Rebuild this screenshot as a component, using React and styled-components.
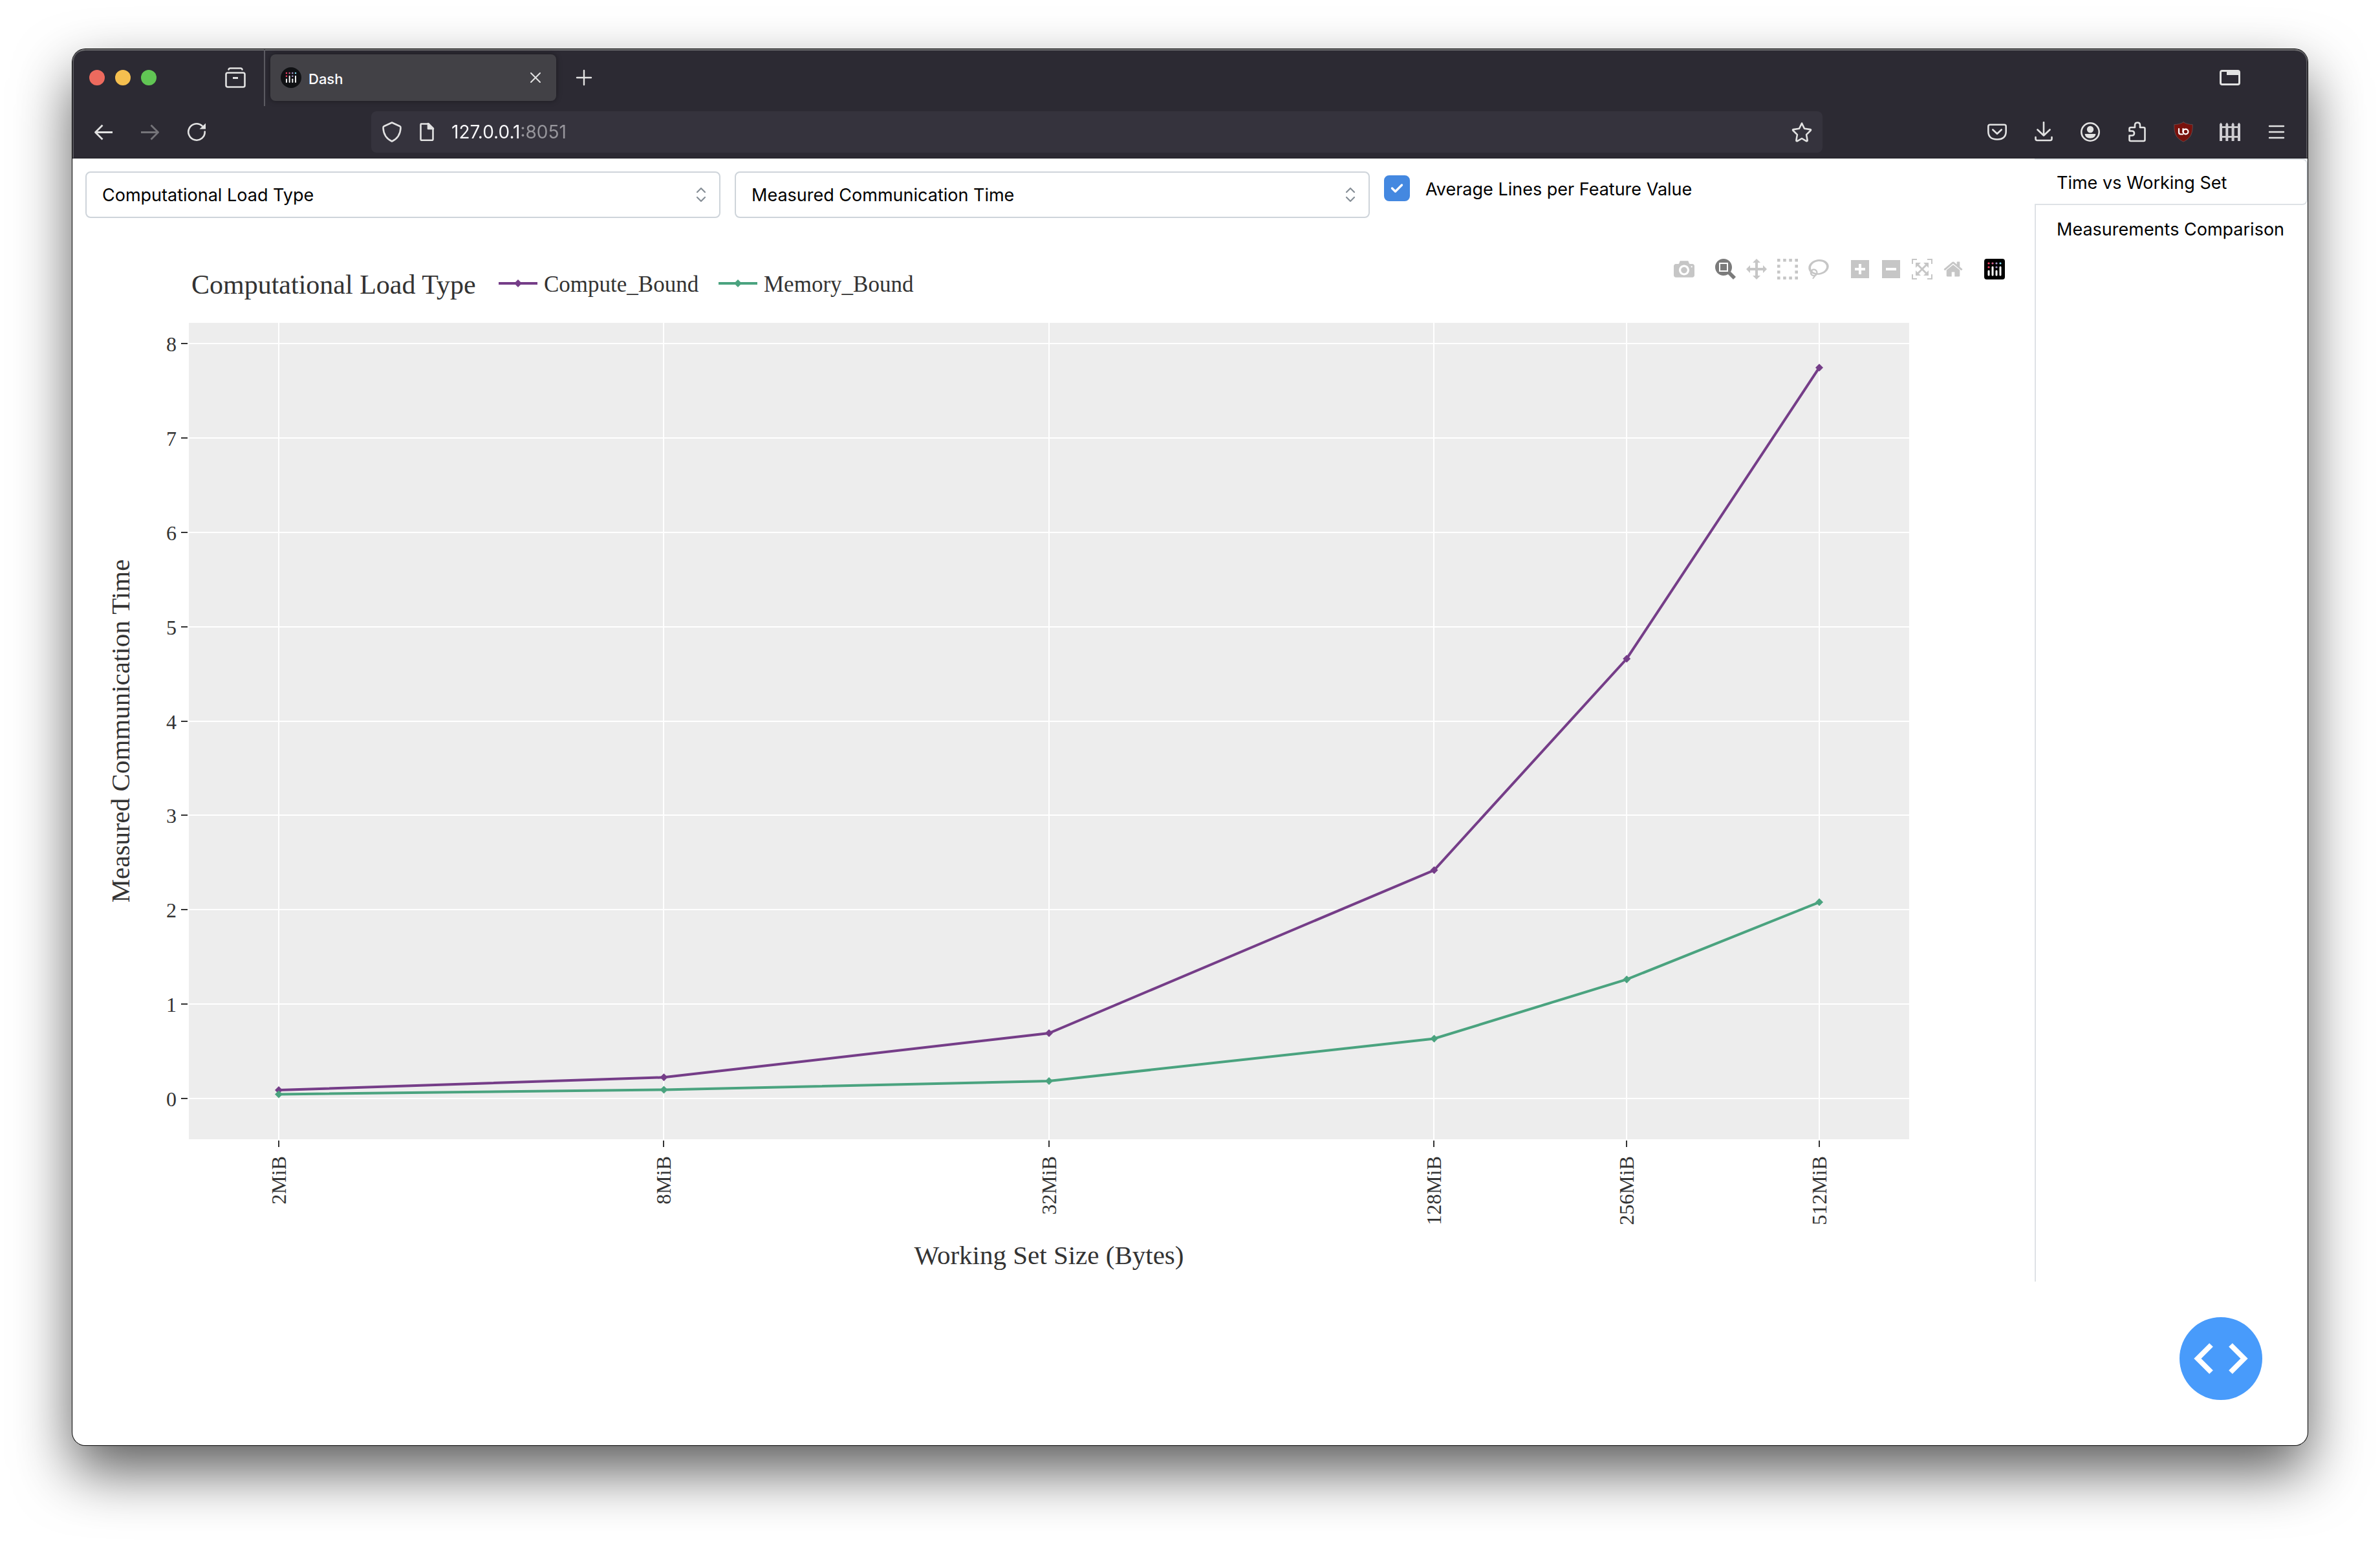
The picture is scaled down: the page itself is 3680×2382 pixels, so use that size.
import React, { useState } from "react";
import styled, { createGlobalStyle } from "styled-components";

const GlobalStyle = createGlobalStyle`
  *, *::before, *::after { box-sizing: border-box; }
  body { margin: 0; background: #fff; font-family: Inter, "Liberation Sans", sans-serif; }
  button, input, select { font: inherit; color: inherit; margin: 0; }
`;

/* ---------- window ---------- */

const Desktop = styled.div`
  min-height: 100vh;
  padding: 76px 112px 148px;
  display: flex;
  overflow: hidden;
`;

const Window = styled.div`
  position: relative;
  flex: 1;
  min-width: 0;
  display: flex;
  flex-direction: column;
  border-radius: 20px;
  background: #fff;
  box-shadow: 0 0 0 1px #000, 0 40px 88px rgba(0, 0, 0, 0.64);
`;

const Chrome = styled.header`
  background: #2c2a33;
  color: #e2e2e2;
  border-radius: 20px 20px 0 0;
  border-bottom: 1px solid #1c1b22;
  box-shadow: inset 2px 0 #55545a, inset -2px 0 #55545a, inset 0 2px #747476;
`;

const TitleBar = styled.div`
  display: flex;
  align-items: center;
  height: 88px;
  padding: 0 84px 0 26px;
`;

const Lights = styled.div`
  display: flex;
  gap: 16px;
  margin-right: 86px;
`;

const Light = styled.button`
  width: 24px;
  height: 24px;
  padding: 0;
  border: 0;
  border-radius: 50%;
  background: ${(p) => p.$color};
`;

const IconButton = styled.button`
  display: grid;
  place-items: center;
  width: 72px;
  height: 64px;
  padding: 0;
  border: 0;
  border-radius: 8px;
  background: none;
  opacity: ${(p) => (p.disabled ? 0.4 : 1)};
`;

const TabStrip = styled.div`
  display: flex;
  align-items: center;
  flex: 1;
  height: 88px;
  margin-left: 8px;
  padding-left: 8px;
  border-left: 2px solid #5b5a61;
`;

const BrowserTab = styled.div`
  display: flex;
  align-items: center;
  width: 442px;
  height: 72px;
  padding: 0 16px;
  border-radius: 8px;
  background: #424146;
  box-shadow: 0 0 8px rgba(0, 0, 0, 0.4);
`;

const TabTitle = styled.span`
  flex: 1;
  padding: 4px 0 0 11px;
  font-size: 22px;
  line-height: 28px;
  font-weight: 500;
  color: #fbfbfe;
`;

const CloseButton = styled(IconButton)`
  width: 32px;
  height: 32px;
`;

const NewTabButton = styled(IconButton)`
  margin-left: 7px;
`;

const NavBar = styled.div`
  display: flex;
  align-items: center;
  height: 80px;
  padding: 0 12px;
`;

const UrlBar = styled.div`
  display: flex;
  align-items: center;
  flex: 1;
  height: 64px;
  margin: 0 234px;
  padding: 0 16px;
  gap: 22px;
  border-radius: 8px;
  background: #35333d;
`;

const UrlInput = styled.input`
  flex: 1;
  min-width: 0;
  height: 40px;
  padding: 0;
  border: 0;
  outline: 0;
  font-size: 28px;
  color: transparent;
  background: linear-gradient(to right, #fbfbfe 109px, #97969c 109px);
  background-clip: text;
  -webkit-background-clip: text;
`;

/* ---------- dashboard ---------- */

const Page = styled.main`
  display: flex;
  align-items: flex-start;
  flex: 1;
  color: #000;
  font-size: 27px;
  line-height: 44px;
`;

const Content = styled.section`
  flex: 1;
  min-width: 0;
`;

const Controls = styled.form`
  display: grid;
  grid-template-columns: repeat(3, 1fr);
  gap: 22px;
  padding: 20px 24px 0 20px;
`;

const SelectBox = styled.div`
  display: grid;
  align-items: center;
  > * { grid-area: 1 / 1; }
  > svg { justify-self: end; margin-right: 22px; pointer-events: none; }
`;

const Select = styled.select`
  appearance: none;
  width: 100%;
  height: 72px;
  padding: 2px 60px 0 24px;
  border: 2px solid #ced4da;
  border-radius: 8px;
  background: #fff;
`;

const CheckRow = styled.label`
  display: flex;
  align-items: flex-start;
  gap: 24px;
  padding-top: 6px;
`;

const CheckBox = styled.span`
  display: grid;
  place-items: center;
  > * { grid-area: 1 / 1; }
  > svg { pointer-events: none; }
`;

const CheckInput = styled.input`
  appearance: none;
  width: 40px;
  height: 40px;
  border: 2px solid #ced4da;
  border-radius: 8px;
  &:checked { background: #4488e0; border-color: #4488e0; }
`;

const Figure = styled.figure`
  position: relative;
  margin: 0;
`;

const ModeBar = styled.div`
  position: absolute;
  top: 55px;
  right: 38px;
  display: flex;
  gap: 16px;
`;

const ModeGroup = styled.div`
  display: flex;
`;

const ModeButton = styled.button`
  display: grid;
  place-items: center;
  width: 48px;
  height: 48px;
  padding: 0;
  border: 0;
  background: none;
  color: ${(p) => (p.$active ? "#7b7b7b" : "#c6c6c6")};
`;

const ChartSvg = styled.svg`
  display: block;
  width: 100%;
  height: auto;
  font-family: "Liberation Serif", serif;
  fill: #333;
`;

const Tabs = styled.nav`
  display: flex;
  flex-direction: column;
  flex: 0 0 422px;
  align-self: flex-start;
  min-height: 1736px;
`;

const TabButton = styled.button`
  height: 72px;
  padding: 3px 0 0 32px;
  text-align: left;
  white-space: nowrap;
  background: none;
  border: 2px solid ${(p) => (p.$active ? "#dee2e6" : "transparent")};
  border-left-color: ${(p) => (p.$active ? "transparent" : "#dee2e6")};
  border-radius: ${(p) => (p.$active ? "0 8px 8px 0" : "0")};
  ${(p) => (p.$active ? "border-left: 0; padding-left: 34px;" : "border-width: 0 0 0 2px;")}
`;

const TabRail = styled.div`
  flex: 1;
  border-left: 2px solid #dee2e6;
`;

const DevToolsButton = styled.button`
  position: absolute;
  right: 70px;
  bottom: 70px;
  display: grid;
  place-items: center;
  width: 128px;
  height: 128px;
  padding: 0;
  border: 0;
  border-radius: 50%;
  background: #489bfb;
`;

/* ---------- icons ---------- */

const Icon = ({ children, size = 32 }) => (
  <svg width={size} height={size} viewBox="0 0 32 32" fill="none" stroke="currentColor" strokeWidth="2.6" strokeLinecap="round" strokeLinejoin="round" aria-hidden="true">
    {children}
  </svg>
);

const TabsOverview = () => (
  <Icon>
    <path d="M5.500 3.500q.5-2 2.500-2h16q2 0 2.500 2" />
    <rect x="1.500" y="8.500" width="29" height="22" rx="2.500" />
    <path d="M12 16.500h8" strokeWidth="3" strokeLinecap="butt" />
  </Icon>
);
const CloseX = () => (
  <Icon size={16}><path d="M2 2l28 28M30 2L2 30" strokeWidth="4" /></Icon>
);
const Plus = () => (
  <Icon><path d="M16 5v22M5 16h22" strokeWidth="2.400" /></Icon>
);
const WindowTabs = () => (
  <Icon>
    <rect x="1.500" y="5.500" width="29" height="21" rx="2.500" strokeWidth="3" />
    <path d="M11 5h18a2 2 0 0 1 2 2v5H11z" fill="currentColor" stroke="none" />
  </Icon>
);
const Back = () => (
  <Icon><path d="M30 16.500H4M14.500 5.500L3.500 16.500l11 11" strokeLinecap="butt" strokeWidth="2.800" /></Icon>
);
const Forward = () => (
  <Icon><path d="M2 16.500h26M17.500 5.500l11 11-11 11" strokeLinecap="butt" strokeWidth="2.800" /></Icon>
);
const Reload = () => (
  <Icon>
    <path d="M28.700 15.500A12.700 12.700 0 1 1 24.500 6.500" />
    <path d="M30 2.500v9h-9.500z" fill="currentColor" stroke="none" />
  </Icon>
);
const Shield = () => (
  <Icon><path d="M16 1.500l12 5.500c1.200.6 1.600 1.400 1.500 2.700C29 20 24.500 26.500 16 30.500 7.500 26.500 3 20 2.500 9.700 2.400 8.400 2.800 7.600 4 7z" /></Icon>
);
const PageIcon = () => (
  <Icon>
    <path d="M7 3.500h11.500l7 7V27q0 1.800-1.800 1.800H8.300Q6.500 28.800 6.500 27V5q0-1.500 1.500-1.500z" />
    <path d="M18 3l8 8h-8z" fill="currentColor" />
  </Icon>
);
const Star = () => (
  <Icon><path d="M16 2.500l4 8.300 9 1.300q1.600.4.500 1.700l-6.400 6.300 1.500 8.800q0 1.700-1.600 1.200L16 26l-7 4.100q-1.600.5-1.600-1.200l1.500-8.800-6.400-6.300q-1.100-1.300.5-1.700l9-1.300z" /></Icon>
);
const Pocket = () => (
  <Icon>
    <path d="M5 4.800h22q2.700 0 2.700 2.700V15q0 12.500-13.700 12.500T2.300 15V7.500Q2.300 4.800 5 4.800z" />
    <path d="M9.300 12.500L16 18.800l6.700-6.300" />
  </Icon>
);
const Download = () => (
  <Icon><path d="M16 1v20M6.500 12.500L16 21.500l9.500-9M3.500 24v2.500q0 2.500 2.500 2.500h20q2.500 0 2.500-2.500V24" /></Icon>
);
const Account = () => (
  <Icon>
    <circle cx="16" cy="16" r="13.700" />
    <circle cx="16" cy="12" r="5.200" fill="currentColor" stroke="none" />
    <path d="M7.500 19h17q-.8 6.700-8.500 6.700T7.500 19z" fill="currentColor" stroke="none" />
  </Icon>
);
const Puzzle = () => (
  <Icon><path d="M13 9V5.500q0-4 4-4t4 4V9h5.500q2 0 2 2v17q0 2-2 2H6.500q-2 0-2-2v-6.500h4q3.500 0 3.500-3.500t-3.500-3.500h-4V11q0-2 2-2z" /></Icon>
);
const UBlock = () => (
  <Icon>
    <path d="M16 .8C12 3.500 7 4.500 1.800 4.500 1.300 18 4.500 25.500 16 31.200 27.500 25.500 30.700 18 30.200 4.500 25 4.500 20 3.500 16 .8z" fill="#78120d" stroke="#6b6468" strokeWidth=".6" />
    <path d="M9 11v5.500q0 3 3 3h3M15.500 11v5" stroke="#fff" strokeWidth="2.200" />
    <circle cx="19.500" cy="15.500" r="3.900" stroke="#fff" strokeWidth="2.200" />
  </Icon>
);
const Fence = () => (
  <Icon>
    <path d="M0 8.500h32M0 23.500h32" strokeWidth="2.400" strokeLinecap="butt" />
    {[2, 11.3, 20.600, 30].map((x) => (
      <path key={x} d={`M${x - 2} 30V4l2-2.500 2 2.500v26z`} fill="#cfcdd2" stroke="none" />
    ))}
  </Icon>
);
const Menu = () => (
  <Icon><path d="M5 7h22M5 16h22M5 25h22" strokeWidth="2.400" /></Icon>
);

const BARS = [
  { x: 7, y: 19, dots: [7, 13], color: "#ff3c62" },
  { x: 13, y: 13, dots: [7], color: "#d8628f" },
  { x: 19, y: 19, dots: [7, 13], color: "#a99bd0" },
  { x: 25, y: 13, dots: [7], color: "#84dcf5" },
];
const PlotlyMark = ({ round }) => (
  <svg width="32" height="32" viewBox="0 0 32 32" aria-hidden="true">
    <rect width="32" height="32" rx={round ? 16 : 4} fill={round ? "#101114" : "#000"} />
    <g transform={round ? "translate(3.5 3.5) scale(.78)" : undefined}>
      {BARS.map((b) => (
        <g key={b.x}>
          <path d={`M${b.x} ${b.y}V25`} stroke="#fff" strokeWidth={round ? 2.400 : 3} strokeLinecap="round" />
          {b.dots.map((y) => <circle key={y} cx={b.x} cy={y} r="1.600" fill={b.color} />)}
        </g>
      ))}
    </g>
  </svg>
);

const UpDown = () => (
  <svg width="16" height="24" viewBox="0 0 16 24" fill="none" stroke="#868e96" strokeWidth="2.200" strokeLinecap="round" strokeLinejoin="round" aria-hidden="true">
    <path d="M2 8l6-6 6 6M2 16l6 6 6-6" />
  </svg>
);

const MODE_ICONS = {
  camera: [1000, "m500 450c-83 0-150-67-150-150 0-83 67-150 150-150 83 0 150 67 150 150 0 83-67 150-150 150z m400 150h-120c-16 0-34 13-39 29l-31 93c-6 15-23 28-40 28h-340c-16 0-34-13-39-28l-31-94c-6-15-23-28-40-28h-120c-55 0-100-45-100-100v-450c0-55 45-100 100-100h800c55 0 100 45 100 100v450c0 55-45 100-100 100z m-400-550c-138 0-250 112-250 250 0 138 112 250 250 250 138 0 250-112 250-250 0-138-112-250-250-250z m365 380c-19 0-35 16-35 35 0 19 16 35 35 35 19 0 35-16 35-35 0-19-16-35-35-35z"],
  zoom: [1000, "m1000-25l-250 251c40 63 63 138 63 218 0 224-182 406-407 406-224 0-406-182-406-406s183-406 407-406c80 0 155 22 218 62l250-250 125 125z m-812 250l0 438 437 0 0-438-437 0z m62 375l313 0 0-312-313 0 0 312z"],
  pan: [1000, "m1000 350l-187 188 0-125-250 0 0 250 125 0-188 187-187-187 125 0 0-250-250 0 0 125-188-188 186-187 0 125 252 0 0-250-125 0 187-188 188 188-125 0 0 250 250 0 0-126 187 188z"],
  select: [1000, "m0 850l0-143 143 0 0 143-143 0z m286 0l0-143 143 0 0 143-143 0z m285 0l0-143 143 0 0 143-143 0z m286 0l0-143 143 0 0 143-143 0z m-857-286l0-143 143 0 0 143-143 0z m857 0l0-143 143 0 0 143-143 0z m-857-285l0-143 143 0 0 143-143 0z m857 0l0-143 143 0 0 143-143 0z m-857-286l0-143 143 0 0 143-143 0z m286 0l0-143 143 0 0 143-143 0z m285 0l0-143 143 0 0 143-143 0z m286 0l0-143 143 0 0 143-143 0z"],
  lasso: [1031, "m1018 538c-36 207-290 336-568 286-277-48-473-256-436-463 10-57 36-108 76-151-13-66 11-137 68-183 34-28 75-41 114-42l-55-70 0 0c-2-1-3-2-4-3-10-14-8-34 5-45 14-11 34-8 45 4 1 1 2 3 2 5l0 0 113 140c16 11 31 24 45 40 4 3 6 7 8 11 48-3 100 0 151 9 278 48 473 255 436 462z m-624-379c-80 14-149 48-197 96 42 42 109 47 156 9 33-26 47-66 41-105z m-187-74c-19 16-33 37-39 60 50-32 109-55 174-68-42-25-95-24-135 8z m360 75c-34-7-69-9-102-8 8 62-16 128-68 170-73 59-175 54-244-5-9 20-16 40-20 61-28 159 121 317 333 354s407-60 434-217c28-159-121-318-333-355z"],
  zoomIn: [875, "m1 787l0-875 875 0 0 875-875 0z m687-500l-187 0 0-187-125 0 0 187-188 0 0 125 188 0 0 187 125 0 0-187 187 0 0-125z"],
  zoomOut: [875, "m0 788l0-876 875 0 0 876-875 0z m688-500l-500 0 0 125 500 0 0-125z"],
  autoscale: [1000, "m250 850l-187 0-63 0 0-62 0-188 63 0 0 188 187 0 0 62z m688 0l-188 0 0-62 188 0 0-188 62 0 0 188 0 62-62 0z m-875-938l0 188-63 0 0-188 0-62 63 0 187 0 0 62-187 0z m875 188l0-188-188 0 0-62 188 0 62 0 0 62 0 188-62 0z m-125 188l-1 0-93-94-156 156 156 156 92-93 2 0 0 250-250 0 0-2 93-92-156-156-156 156 94 92 0 2-250 0 0-250 0 0 93 93 157-156-157-156-93 94 0 0 0-250 250 0 0 0-94 93 156 157 156-157-93-93 0 0 250 0 0 250z"],
  home: [928.6, "m786 296v-267q0-15-11-26t-25-10h-214v214h-143v-214h-214q-15 0-25 10t-11 26v267q0 1 0 2t0 2l321 264 321-264q1-1 1-4z m124 39l-34-41q-5-5-12-6h-2q-7 0-12 3l-386 322-386-322q-7-4-13-4-7 2-12 7l-35 41q-4 5-3 13t6 12l401 334q18 15 42 15t43-15l136-114v109q0 8 5 13t13 5h107q8 0 13-5t5-13v-227l122-102q5-5 6-12t-4-13z"],
};

const ModeIcon = ({ name }) => {
  const [width, d] = MODE_ICONS[name];
  return (
    <svg width="32" height="32" viewBox={`0 0 ${width} 1000`} aria-hidden="true">
      <path d={d} transform="matrix(1 0 0 -1 0 850)" fill="currentColor" />
    </svg>
  );
};

const MODE_GROUPS = [
  [["camera", "Download plot as a png"]],
  [["zoom", "Zoom"], ["pan", "Pan"], ["select", "Box Select"], ["lasso", "Lasso Select"]],
  [["zoomIn", "Zoom in"], ["zoomOut", "Zoom out"], ["autoscale", "Autoscale"], ["home", "Reset axes"]],
];

/* ---------- chart ---------- */

const CHART = { width: 3034, height: 1644, left: 180, top: 162, plotWidth: 2660, plotHeight: 1262 };
const SIZES = [2, 8, 32, 128, 256, 512];
const SERIES = [
  { name: "Compute_Bound", color: "#753d88", legendX: 659, values: [0.089, 0.224, 0.692, 2.42, 4.66, 7.745] },
  { name: "Memory_Bound", color: "#4aa37f", legendX: 999, values: [0.045, 0.093, 0.185, 0.634, 1.262, 2.08] },
];
const xOf = (mib) => 319 + (Math.log2(mib) - 1) * 297.75;
const yOf = (value) => 1361 - value * 145.875;
const diamond = (x, y) => `M${x - 6} ${y}L${x} ${y - 6}L${x + 6} ${y}L${x} ${y + 6}Z`;

const Chart = () => {
  const bottom = CHART.top + CHART.plotHeight;
  const middle = CHART.left + CHART.plotWidth / 2;
  return (
    <ChartSvg viewBox={`0 0 ${CHART.width} ${CHART.height}`} role="img" aria-label="Measured Communication Time by Working Set Size">
      <rect x={CHART.left} y={CHART.top} width={CHART.plotWidth} height={CHART.plotHeight} fill="#ededed" />
      {SIZES.map((s) => (
        <g key={s}>
          <path d={`M${Math.floor(xOf(s))} ${CHART.top}V${bottom}`} stroke="#fff" strokeWidth="2" />
          <path d={`M${Math.floor(xOf(s))} ${bottom + 2}v10`} stroke="#333" strokeWidth="2" />
          <text transform={`translate(${Math.floor(xOf(s)) + 11} ${bottom + 26}) rotate(-90)`} textAnchor="end" fontSize="32">{s}MiB</text>
        </g>
      ))}
      {[0, 1, 2, 3, 4, 5, 6, 7, 8].map((v) => (
        <g key={v}>
          <path d={`M${CHART.left} ${Math.round(yOf(v))}h${CHART.plotWidth}`} stroke="#fff" strokeWidth="2" />
          <path d={`M${CHART.left - 2} ${Math.round(yOf(v))}h-10`} stroke="#333" strokeWidth="2" />
          <text x={CHART.left - 19} y={Math.round(yOf(v)) + 12} textAnchor="end" fontSize="32">{v}</text>
        </g>
      ))}
      {SERIES.map((s) => (
        <g key={s.name}>
          <path d={"M" + SIZES.map((m, i) => `${xOf(m)} ${yOf(s.values[i])}`).join("L")} fill="none" stroke={s.color} strokeWidth="4" />
          {SIZES.map((m, i) => <path key={m} d={diamond(xOf(m), yOf(s.values[i]))} fill={s.color} />)}
          <path d={`M${s.legendX} 101h60`} stroke={s.color} strokeWidth="4" />
          <path d={diamond(s.legendX + 30, 101)} fill={s.color} />
          <text x={s.legendX + 70} y="114" fontSize="35">{s.name}</text>
        </g>
      ))}
      <text x="184" y="117" fontSize="42">Computational Load Type</text>
      <text x={middle} y="1617" textAnchor="middle" fontSize="41">Working Set Size (Bytes)</text>
      <text transform={`translate(88 ${CHART.top + CHART.plotHeight / 2}) rotate(-90)`} textAnchor="middle" fontSize="41">Measured Communication Time</text>
    </ChartSvg>
  );
};

const PAGES = ["Time vs Working Set", "Measurements Comparison"];

export default function App() {
  const [page, setPage] = useState(PAGES[0]);
  const [average, setAverage] = useState(true);
  return (
    <>
      <GlobalStyle />
      <Desktop>
        <Window>
          <Chrome>
            <TitleBar>
              <Lights>
                <Light $color="#ed6a5e" aria-label="Close window" />
                <Light $color="#f5bf4f" aria-label="Minimize window" />
                <Light $color="#61c554" aria-label="Zoom window" />
              </Lights>
              <IconButton aria-label="Recent browsing"><TabsOverview /></IconButton>
              <TabStrip>
                <BrowserTab>
                  <PlotlyMark round />
                  <TabTitle>Dash</TabTitle>
                  <CloseButton aria-label="Close tab"><CloseX /></CloseButton>
                </BrowserTab>
                <NewTabButton aria-label="New tab"><Plus /></NewTabButton>
              </TabStrip>
              <IconButton aria-label="List all tabs"><WindowTabs /></IconButton>
            </TitleBar>
            <NavBar>
              <IconButton aria-label="Back"><Back /></IconButton>
              <IconButton aria-label="Forward" disabled><Forward /></IconButton>
              <IconButton aria-label="Reload"><Reload /></IconButton>
              <UrlBar>
                <Shield />
                <PageIcon />
                <UrlInput aria-label="Address" defaultValue="127.0.0.1:8051" spellCheck={false} />
                <Star />
              </UrlBar>
              <IconButton aria-label="Save to Pocket"><Pocket /></IconButton>
              <IconButton aria-label="Downloads"><Download /></IconButton>
              <IconButton aria-label="Account"><Account /></IconButton>
              <IconButton aria-label="Extensions"><Puzzle /></IconButton>
              <IconButton aria-label="uBlock Origin"><UBlock /></IconButton>
              <IconButton aria-label="Containers"><Fence /></IconButton>
              <IconButton aria-label="Menu"><Menu /></IconButton>
            </NavBar>
          </Chrome>
          <Page>
            <Content>
              <Controls>
                <SelectBox>
                  <Select aria-label="Feature"><option>Computational Load Type</option></Select>
                  <UpDown />
                </SelectBox>
                <SelectBox>
                  <Select aria-label="Measurement"><option>Measured Communication Time</option></Select>
                  <UpDown />
                </SelectBox>
                <CheckRow>
                  <CheckBox>
                    <CheckInput type="checkbox" checked={average} onChange={(e) => setAverage(e.target.checked)} />
                    <svg width="20" height="16" viewBox="0 0 20 16" fill="none" stroke="#fff" strokeWidth="3.400" strokeLinecap="round" strokeLinejoin="round" aria-hidden="true">
                      <path d="M2.500 8l5 5L17.500 3" />
                    </svg>
                  </CheckBox>
                  Average Lines per Feature Value
                </CheckRow>
              </Controls>
              <Figure>
                <Chart />
                <ModeBar>
                  {MODE_GROUPS.map((group, i) => (
                    <ModeGroup key={i}>
                      {group.map(([name, label]) => (
                        <ModeButton key={name} aria-label={label} $active={name === "zoom"}><ModeIcon name={name} /></ModeButton>
                      ))}
                    </ModeGroup>
                  ))}
                  <ModeGroup>
                    <ModeButton as="a" href="https://plotly.com/" aria-label="Produced with Plotly"><PlotlyMark /></ModeButton>
                  </ModeGroup>
                </ModeBar>
              </Figure>
            </Content>
            <Tabs>
              {PAGES.map((name) => (
                <TabButton key={name} $active={name === page} aria-pressed={name === page} onClick={() => setPage(name)}>{name}</TabButton>
              ))}
              <TabRail />
            </Tabs>
          </Page>
          <DevToolsButton aria-label="Dash dev tools">
            <svg width="84" height="48" viewBox="0 0 84 48" fill="none" stroke="#fff" strokeWidth="8" aria-hidden="true">
              <path d="M27 3L6 24l21 21M57 3l21 21-21 21" />
            </svg>
          </DevToolsButton>
        </Window>
      </Desktop>
    </>
  );
}
